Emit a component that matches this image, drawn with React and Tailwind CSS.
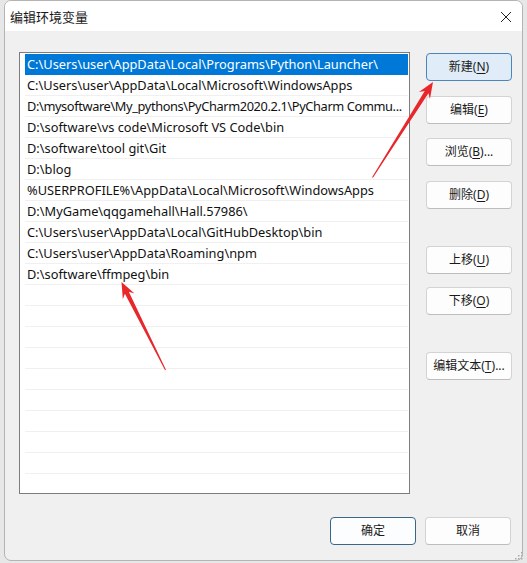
import React from "react";

const rows = [
  "C:\\Users\\user\\AppData\\Local\\Programs\\Python\\Launcher\\",
  "C:\\Users\\user\\AppData\\Local\\Microsoft\\WindowsApps",
  "D:\\mysoftware\\My_pythons\\PyCharm2020.2.1\\PyCharm Commu...",
  "D:\\software\\vs code\\Microsoft VS Code\\bin",
  "D:\\software\\tool git\\Git",
  "D:\\blog",
  "%USERPROFILE%\\AppData\\Local\\Microsoft\\WindowsApps",
  "D:\\MyGame\\qqgamehall\\Hall.57986\\",
  "C:\\Users\\user\\AppData\\Local\\GitHubDesktop\\bin",
  "C:\\Users\\user\\AppData\\Roaming\\npm",
  "D:\\software\\ffmpeg\\bin",
];

const allRows = [...rows, ...Array(10).fill("")];

const font = { fontFamily: '"Segoe UI", "Noto Sans", "Noto Sans CJK SC", sans-serif' };

function Btn({ label, k, suffix = "", variant = "normal", className = "" }) {
  const styles =
    variant === "focus"
      ? "border-[#4a86bd] bg-[#e0edf8]"
      : variant === "default"
      ? "border-[#3a6688] bg-[#fcfdfe]"
      : "border-[#d3d3d3] border-b-[#bdbdbd] bg-[#fdfdfd]";
  return (
    <div
      className={`w-[86px] h-[28px] rounded-[4px] border flex items-center justify-center text-[12px] text-[#1a1a1a] ${styles} ${className}`}
      style={font}
    >
      <span>
        {label}
        {k && (
          <>
            (<span className="underline underline-offset-2">{k}</span>)
          </>
        )}
        {suffix}
      </span>
    </div>
  );
}

function Arrow({ x1, y1, x2, y2 }) {
  const dx = x2 - x1;
  const dy = y2 - y1;
  const len = Math.hypot(dx, dy);
  const ux = dx / len;
  const uy = dy / len;
  const px = -uy;
  const py = ux;
  const headLen = 16;
  const headW = 6.5;
  const shaftW = 2.2;
  const bx = x2 - ux * headLen;
  const by = y2 - uy * headLen;
  const nx = x2 - ux * (headLen - 4);
  const ny = y2 - uy * (headLen - 4);
  const pts = [
    [x1 + px * 0.5, y1 + py * 0.5],
    [nx + px * shaftW, ny + py * shaftW],
    [bx + px * headW, by + py * headW],
    [x2, y2],
    [bx - px * headW, by - py * headW],
    [nx - px * shaftW, ny - py * shaftW],
    [x1 - px * 0.5, y1 - py * 0.5],
  ];
  return <polygon points={pts.map((p) => p.join(",")).join(" ")} fill="#e8272b" />;
}

export default function App() {
  return (
    <div className="relative w-[527px] h-[563px] bg-[#e7e7e7] overflow-hidden">
      <div className="ml-[4px] w-[519px] h-[561px] rounded-[7px] border border-[#b4b4b4] bg-[#f0f0f0] flex flex-col overflow-hidden">
        {/* title bar */}
        <div className="h-[30px] bg-white flex items-center justify-between pl-[5px] pr-[10px] shrink-0">
          <span
            className="text-[13px] text-[#1a1a1a] mt-[1px]"
            style={{ fontFamily: '"Noto Sans CJK SC", sans-serif' }}
          >
            编辑环境变量
          </span>
          <svg width="12" height="12" viewBox="0 0 12 12" className="mt-[1px]">
            <path d="M1 1 L11 11 M11 1 L1 11" stroke="#222" strokeWidth="1" fill="none" />
          </svg>
        </div>
        {/* body */}
        <div className="flex pl-[14px] pt-[21px]">
          <div className="w-[391px] h-[442px] border border-[#7d7d7d] bg-white pt-[1px] pl-[5px] pr-[1px] overflow-hidden">
            {allRows.map((r, i) => (
              <div
                key={i}
                className={`h-[21px] flex items-center pl-[2px] pt-[1px] whitespace-nowrap overflow-hidden text-[12.8px] border-b ${
                  i === 0
                    ? "bg-[#0078d7] text-white border-[#0078d7]"
                    : "text-[#111] border-[#f0f0f0]"
                } ${i === 2 ? "tracking-[-0.38px]" : ""}`}
                style={font}
              >
                {r}
              </div>
            ))}
          </div>
          <div className="ml-[16px] pt-[1px] flex flex-col">
            <Btn label="新建" k="N" variant="focus" />
            <Btn label="编辑" k="E" className="mt-[15px]" />
            <Btn label="浏览" k="B" suffix="..." className="mt-[14px]" />
            <Btn label="删除" k="D" className="mt-[15px]" />
            <Btn label="上移" k="U" className="mt-[37px]" />
            <Btn label="下移" k="O" className="mt-[13px]" />
            <Btn label="编辑文本" k="T" suffix="..." className="mt-[37px]" />
          </div>
        </div>
        {/* bottom buttons */}
        <div className="flex justify-end gap-[9px] pr-[11px] mt-[23px]">
          <Btn label="确定" variant="default" />
          <Btn label="取消" />
        </div>
      </div>
      {/* size grip */}
      <svg className="absolute left-[514px] top-[551px]" width="10" height="10" viewBox="0 0 10 10">
        <rect x="7" y="1" width="1.5" height="1.5" fill="#aaa" />
        <rect x="4" y="4" width="1.5" height="1.5" fill="#aaa" />
        <rect x="7" y="4" width="1.5" height="1.5" fill="#aaa" />
        <rect x="1" y="7" width="1.5" height="1.5" fill="#aaa" />
        <rect x="4" y="7" width="1.5" height="1.5" fill="#aaa" />
        <rect x="7" y="7" width="1.5" height="1.5" fill="#aaa" />
      </svg>
      {/* annotation arrows */}
      <svg className="absolute left-0 top-0 pointer-events-none" width="527" height="563">
        <Arrow x1={372.5} y1={177.5} x2={433} y2={82} />
        <Arrow x1={165.5} y1={370} x2={121.5} y2={282} />
      </svg>
    </div>
  );
}
